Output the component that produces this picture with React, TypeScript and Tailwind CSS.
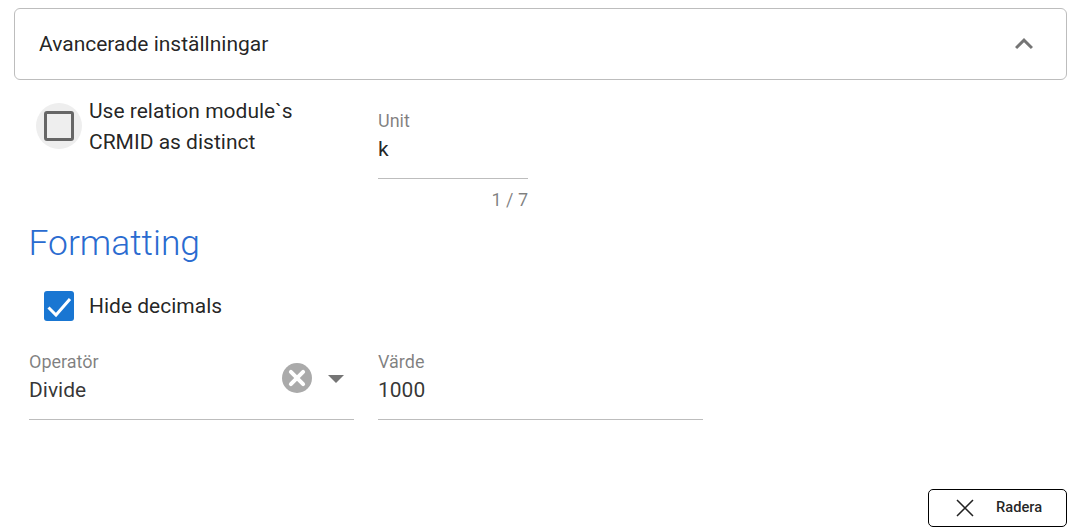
export default function App() {
  return (
    <div className="w-[1078px] h-[532px] bg-white overflow-hidden font-['Roboto',sans-serif] text-[21px] text-[#000000de] pt-2 pl-3.5 pr-[11px] flex flex-col">
      <div className="h-[72px] shrink-0 border border-[#bdbdbd] rounded-[6px] flex items-center justify-between pl-6 pr-[24px]">
        <span className="mt-[2px]">Avancerade inställningar</span>
        <svg width="36" height="36" viewBox="0 0 24 24" fill="#757575"><path d="M7.41 15.41 12 10.83l4.59 4.58L18 14l-6-6-6 6z" /></svg>
      </div>
      <div className="flex mt-[15px] pl-[22px] h-[129px]">
        <div className="w-[342px] flex items-start">
          <div className="w-[46px] h-[46px] rounded-full bg-[#eeeeee] flex items-center justify-center mt-2 shrink-0">
            <div className="w-[30px] h-[30px] border-[3px] border-[#666666] rounded-[3px]" />
          </div>
          <div className="ml-[7px] w-[250px] leading-[31px] mt-[1px]">Use relation module`s<br />CRMID as distinct</div>
        </div>
        <div className="w-[150px]">
          <div className="text-[18px] leading-5 mt-[16px] text-[#00000080]">Unit</div>
          <div className="leading-6 mt-[6px] text-[#000000de]">k</div>
          <div className="border-b border-[#bdbdbd] h-[18px]" />
          <div className="text-right text-[18px] leading-5 mt-[11px] text-[#00000080]">1 / 7</div>
        </div>
      </div>
      <h2 className="text-[35.4px] font-light leading-[42px] text-[#2a6bd0] ml-[14.5px] mt-[-2px]">Formatting</h2>
      <div className="flex items-center ml-[30px] mt-[27px] h-[30px]">
        <div className="w-[30px] h-[30px] rounded-[3px] bg-[#1976d2] flex items-center justify-center">
          <svg width="30" height="30" viewBox="0 0 30 30" fill="none" stroke="white" strokeWidth="3"><path d="M4.5 16.5 12 24 26 8" /></svg>
        </div>
        <span className="ml-[15px] mt-[2px]">Hide decimals</span>
      </div>
      <div className="flex ml-[15px] mt-[32px] gap-[24px]">
        <div className="w-[325px] h-[67px] border-b border-[#bdbdbd] relative">
          <div className="text-[18px] leading-5 text-[#00000080] -mt-[1px]">Operatör</div>
          <div className="leading-6 mt-[6px] text-[#000000cc]">Divide</div>
          <div className="absolute left-[253px] top-[10px] w-[30px] h-[30px] rounded-full bg-[#aaaaaa] flex items-center justify-center">
            <svg width="20" height="20" viewBox="0 0 18 18" stroke="white" strokeWidth="3.6" strokeLinecap="round"><path d="M3.5 3.5 14.5 14.5M14.5 3.5 3.5 14.5" /></svg>
          </div>
          <div className="absolute left-[299px] top-[22px] w-0 h-0 border-x-[8px] border-x-transparent border-t-[8px] border-t-[#757575]" />
        </div>
        <div className="w-[325px] h-[67px] border-b border-[#bdbdbd]">
          <div className="text-[18px] leading-5 text-[#00000080] -mt-[1px]">Värde</div>
          <div className="leading-6 mt-[6px] text-[#000000cc]">1000</div>
        </div>
      </div>
      <div className="flex justify-end mt-[69px]">
        <button className="w-[139px] h-[38px] border border-[#000000] rounded-[5px] flex items-center pl-[24px] text-[14.7px] font-medium text-[#000000de]">
          <svg width="24" height="24" viewBox="0 0 24 24" fill="none" stroke="#222" strokeWidth="1.5"><path d="M4 4 20 20M20 4 4 20" /></svg>
          <span className="ml-[19px] -mt-[1px]">Radera</span>
        </button>
      </div>
    </div>
  );
}
